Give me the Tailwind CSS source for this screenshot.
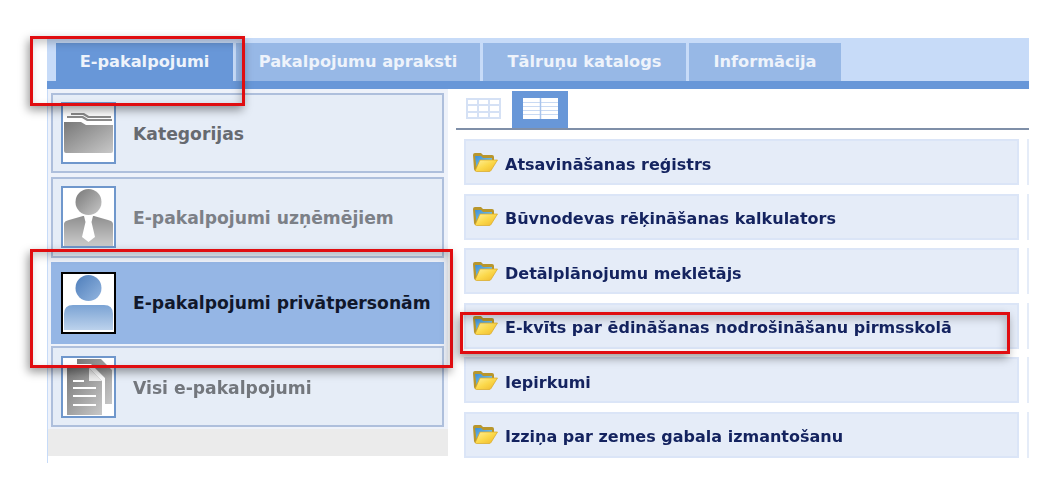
<!DOCTYPE html>
<html lang="lv">
<head>
<meta charset="utf-8">
<script src="https://cdn.jsdelivr.net/npm/@tailwindcss/browser@4"></script>
<title>E-pakalpojumi</title>
</head>
<body class="bg-white">
<svg width="0" height="0" class="absolute">
  <defs>
    <linearGradient id="g1" x1="0" y1="0" x2="1" y2="1"><stop offset="0" stop-color="#787878"/><stop offset="1" stop-color="#c8c8c8"/></linearGradient>
    <linearGradient id="g2" x1="0" y1="0" x2="0" y2="1"><stop offset="0" stop-color="#8f8f8f"/><stop offset="1" stop-color="#cbcbcb"/></linearGradient>
    <linearGradient id="b1" x1="0" y1="0" x2="1" y2="1"><stop offset="0" stop-color="#4d7dba"/><stop offset="1" stop-color="#94b6e0"/></linearGradient>
    <linearGradient id="b2" x1="0" y1="0" x2="0" y2="1"><stop offset="0" stop-color="#7ba3d4"/><stop offset="1" stop-color="#bcd2ec"/></linearGradient>
    <linearGradient id="y1" x1="0" y1="0" x2="1" y2="1"><stop offset="0" stop-color="#fff09a"/><stop offset=".5" stop-color="#fbd84a"/><stop offset="1" stop-color="#eeb52a"/></linearGradient>
    <linearGradient id="s1" x1="0" y1="0" x2="1" y2="1"><stop offset="0" stop-color="#3d8fd8"/><stop offset="1" stop-color="#8ad2ee"/></linearGradient>
    <symbol id="open" viewBox="0 0 26 20">
      <path d="M1 3 Q1 1 3 1 H9 L11 3 H20 Q22 3 22 5 V8 H8 L5 19 H4 Q2 19 2 17 Z" fill="#b8962c"/>
      <path d="M3 4 H9 L11 6 H20 V8 H8 L4.500 15 Z" fill="url(#s1)"/>
      <path d="M8 8 H25.500 L19 18.500 Q18.500 19.500 17 19.500 H4.500 Q3 19.500 3.500 18 Z" fill="url(#y1)" stroke="#d9a822" stroke-width=".7"/>
    </symbol>
  </defs>
</svg>

<main class="relative w-[1059px] h-[481px] overflow-hidden pl-[47px] pt-[38px] font-['DejaVu_Sans',sans-serif] font-bold blur-[0.35px]">
  <div class="w-[982px]">
    <nav class="h-[43px] bg-[#c7dbf8] pl-[9px] pt-[5px] flex gap-[3px] text-[16.2px] text-[#eef3fb]">
      <a class="w-[177px] h-[38px] bg-[#6897d8] flex items-center justify-center">E-pakalpojumi</a>
      <a class="w-[244px] h-[38px] bg-[#97b8e6] flex items-center justify-center whitespace-nowrap">Pakalpojumu apraksti</a>
      <a class="w-[203px] h-[38px] bg-[#97b8e6] flex items-center justify-center whitespace-nowrap">Tālruņu katalogs</a>
      <a class="w-[152px] h-[38px] bg-[#97b8e6] flex items-center justify-center">Informācija</a>
    </nav>
    <div class="h-[8px] bg-[#6897d8]"></div>

    <div class="flex">
      <aside class="w-[401px] shrink-0 border-l border-[#c7dbf8] h-[374px] flex flex-col">
        <div class="pl-[3px] pr-[4px] pt-[4px] pb-[2px] flex-1 bg-[#eef2fa] text-[17.2px] flex flex-col">
          <a class="h-[80px] mb-[4px] border-2 border-[#aebfdc] bg-[#e6edf7] flex items-center gap-[17px] pl-[8px] text-[#666a70]">
            <span class="w-[55px] h-[62px] border-2 border-[#6f97cc] bg-white shrink-0">
              <svg viewBox="0 0 51 58" class="w-full h-full"><path d="M8 9 H21 L26 12 H48 V14 H25 L20 11 H8Z M4 12 H20 L25 15 H49 V17 H24 L19 14 H4Z" fill="#8b8b8b"/><path d="M1 18 H18 L23 21 H50 V47 Q50 49 48 49 H3 Q1 49 1 47 Z" fill="url(#g1)"/></svg>
            </span>
            <span class="pt-[4px]">Kategorijas</span>
          </a>
          <a class="h-[81px] mb-[4px] border-2 border-[#aebfdc] bg-[#e6edf7] flex items-center gap-[17px] pl-[8px] text-[#7c8087]">
            <span class="w-[55px] h-[62px] -mt-[2px] border-2 border-[#6f97cc] bg-white shrink-0">
              <svg viewBox="0 0 51 58" class="w-full h-full"><circle cx="25.500" cy="14" r="13" fill="url(#g1)"/><path d="M1 58 V36 Q1 33 6 32 L20 28 H31 L45 32 Q50 33 50 36 V58 Z" fill="url(#g2)"/><path d="M21 28 H30 L28.500 34 L32 49 L25.500 54 L19 49 L22.500 34 Z" fill="#fff"/></svg>
            </span>
            <span class="pt-[2px]">E-pakalpojumi uzņēmējiem</span>
          </a>
          <a class="h-[82px] mb-[2px] bg-[#95b6e5] flex items-center gap-[17px] pl-[10px] text-[#11182b]">
            <span class="w-[55px] h-[62px] border-2 border-black bg-white shrink-0">
              <svg viewBox="0 0 51 58" class="w-full h-full"><circle cx="25.500" cy="14" r="13" fill="url(#b1)"/><path d="M1 56 V40 Q1 31 10 31 H41 Q50 31 50 40 V56 Z" fill="url(#b2)"/></svg>
            </span>
            <span class="pt-[2px] whitespace-nowrap">E-pakalpojumi privātpersonām</span>
          </a>
          <a class="h-[81px] border-2 border-[#aebfdc] bg-[#e6edf7] flex items-center gap-[17px] pl-[8px] text-[#73777d]">
            <span class="w-[55px] h-[62px] border-2 border-[#6f97cc] bg-white shrink-0">
              <svg viewBox="0 0 51 58" class="w-full h-full"><path d="M14 1 H38 L49 12 V46 H42 V20 L28 6 H14Z" fill="url(#g1)"/><path d="M4 10 H26 L39 23 V57 H4 Z" fill="url(#g1)"/><path d="M26 10 L39 23 H26Z" fill="#eee"/><path d="M10 23 H21 M10 30 H33 M10 38 H33 M10 47 H33" stroke="#fff" stroke-width="1.800"/></svg>
            </span>
            <span class="pt-[4px]">Visi e-pakalpojumi</span>
          </a>
        </div>
        <div class="h-[28px] bg-[#ebebeb] mb-[7px]"></div>
      </aside>

      <section class="flex-1 pl-[8px] pt-[2px]">
        <div class="h-[39px] border-b-2 border-[#7f8fa8] flex items-start pl-[10px] gap-[11px]">
          <span class="w-[35px] h-[21px] mt-[7px] grid grid-cols-3 grid-rows-3 gap-[2px] border-2 border-[#d5e1f5] bg-[#d5e1f5]">
            <i class="bg-white"></i><i class="bg-white"></i><i class="bg-white"></i><i class="bg-white"></i><i class="bg-white"></i><i class="bg-white"></i><i class="bg-white"></i><i class="bg-white"></i><i class="bg-white"></i>
          </span>
          <span class="w-[56px] h-[37px] bg-[#6897d8] flex items-start justify-center pt-[7px]">
            <svg viewBox="0 0 35 21" class="w-[35px] h-[21px]"><rect width="35" height="21" fill="#fff"/><path d="M0 4.500H35M0 8.500H35M0 12.500H35M0 16.500H35" stroke="#c9daf3"/><path d="M17.500 0V21" stroke="#a9c4ec" stroke-width="1.500"/></svg>
          </span>
        </div>
        <div class="pl-[8px] pt-[9px] flex gap-[8px]">
          <ul class="w-[555px] shrink-0 flex flex-col gap-[8.5px] text-[16px] text-[#14235f] whitespace-nowrap">
            <li class="h-[46px] bg-[#e5ecf8] border-2 border-[#dbe5f7] flex items-center gap-[7px] pl-[6px] pt-[5px]"><svg class="w-[26px] h-[20px] shrink-0 mb-[6px]"><use href="#open"/></svg>Atsavināšanas reģistrs</li>
            <li class="h-[46px] bg-[#e5ecf8] border-2 border-[#dbe5f7] flex items-center gap-[7px] pl-[6px] pt-[5px]"><svg class="w-[26px] h-[20px] shrink-0 mb-[6px]"><use href="#open"/></svg>Būvnodevas rēķināšanas kalkulators</li>
            <li class="h-[46px] bg-[#e5ecf8] border-2 border-[#dbe5f7] flex items-center gap-[7px] pl-[6px] pt-[5px]"><svg class="w-[26px] h-[20px] shrink-0 mb-[6px]"><use href="#open"/></svg>Detālplānojumu meklētājs</li>
            <li class="h-[46px] bg-[#e5ecf8] border-2 border-[#dbe5f7] flex items-center gap-[7px] pl-[6px] pt-[5px]"><svg class="w-[26px] h-[20px] shrink-0 mb-[6px]"><use href="#open"/></svg>E-kvīts par ēdināšanas nodrošināšanu pirmsskolā</li>
            <li class="h-[46px] bg-[#e5ecf8] border-2 border-[#dbe5f7] flex items-center gap-[7px] pl-[6px] pt-[5px]"><svg class="w-[26px] h-[20px] shrink-0 mb-[6px]"><use href="#open"/></svg>Iepirkumi</li>
            <li class="h-[46px] bg-[#e5ecf8] border-2 border-[#dbe5f7] flex items-center gap-[7px] pl-[6px] pt-[5px]"><svg class="w-[26px] h-[20px] shrink-0 mb-[6px]"><use href="#open"/></svg>Izziņa par zemes gabala izmantošanu</li>
          </ul>
          <div class="flex-1 flex flex-col gap-[8.5px]">
            <i class="h-[46px] bg-[#e5ecf8]"></i><i class="h-[46px] bg-[#e5ecf8]"></i><i class="h-[46px] bg-[#e5ecf8]"></i><i class="h-[46px] bg-[#e5ecf8]"></i><i class="h-[46px] bg-[#e5ecf8]"></i><i class="h-[46px] bg-[#e5ecf8]"></i>
          </div>
        </div>
      </section>
    </div>
  </div>

  <div class="absolute left-[30px] top-[36px] w-[215px] h-[70px] border-[3px] border-[#e00d10] shadow-[-2px_4px_9px_rgba(0,0,0,.4),inset_-2px_4px_9px_rgba(0,0,0,.22)]"></div>
  <div class="absolute left-[30px] top-[249px] w-[423px] h-[119px] border-[3px] border-[#e00d10] shadow-[-2px_4px_9px_rgba(0,0,0,.4),inset_-2px_4px_9px_rgba(0,0,0,.22)]"></div>
  <div class="absolute left-[460px] top-[312px] w-[550px] h-[42px] border-[3px] border-[#e00d10] shadow-[-2px_4px_9px_rgba(0,0,0,.4),inset_-2px_4px_9px_rgba(0,0,0,.22)]"></div>
</main>
</body>
</html>
